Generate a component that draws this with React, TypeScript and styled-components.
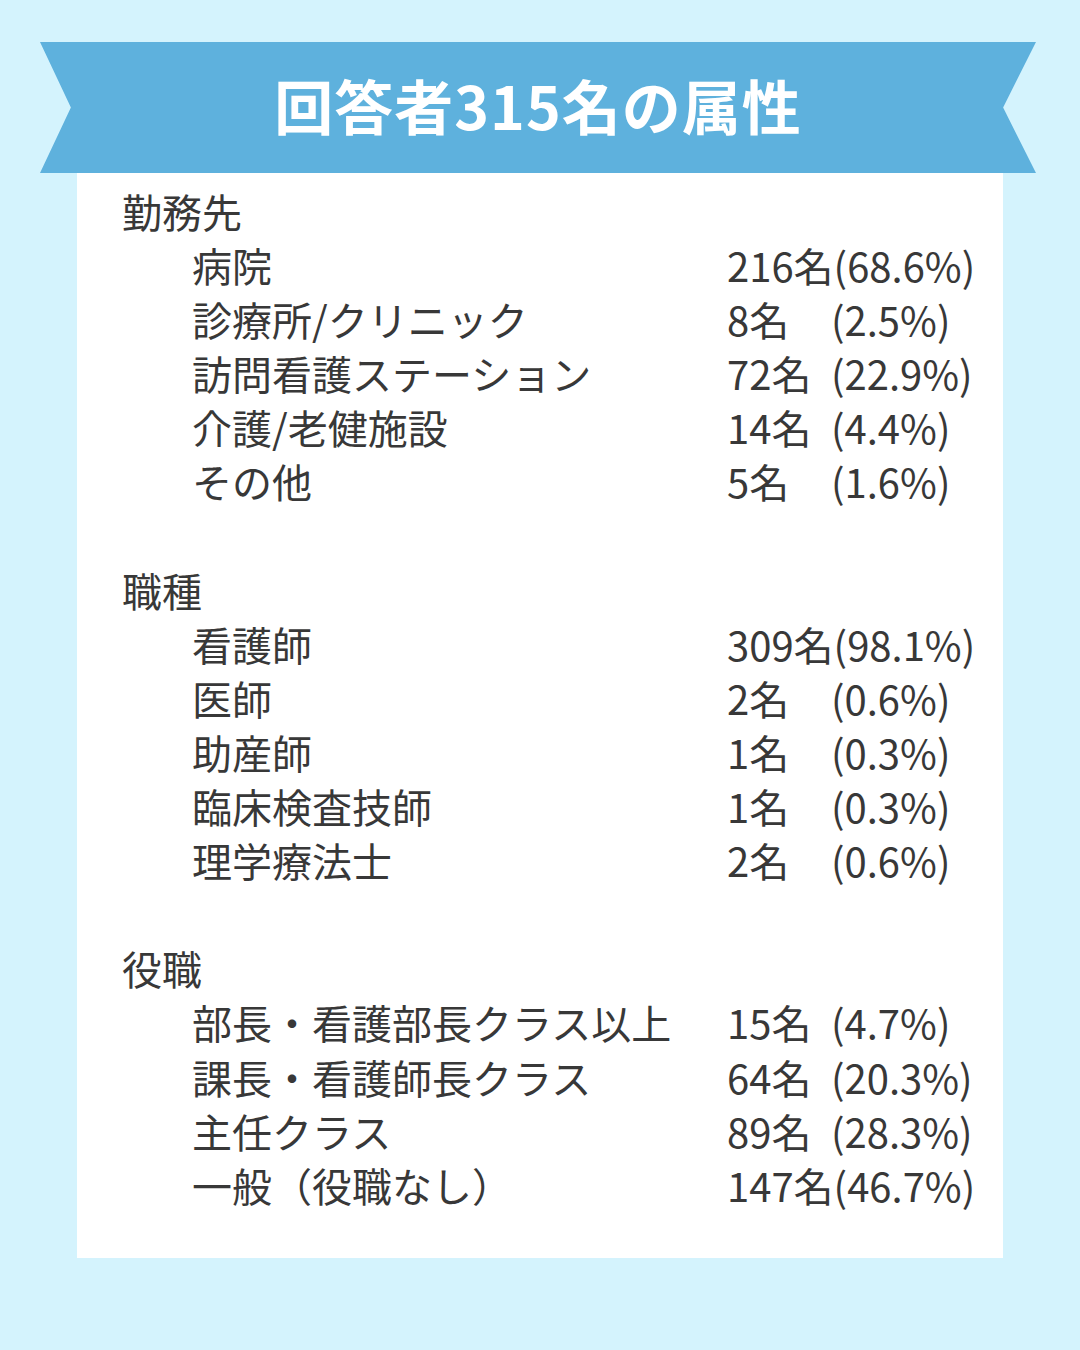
import styled, { createGlobalStyle } from "styled-components";

const GlobalStyle = createGlobalStyle`
  html, body {
    margin: 0;
    padding: 0;
    background: #d4f3fd;
  }
`;

interface Item {
  label: string;
  count: string;
  percent: string;
}

interface Section {
  title: string;
  items: Item[];
}

const sections: Section[] = [
  {
    title: "勤務先",
    items: [
      { label: "病院", count: "216名", percent: "(68.6%)" },
      { label: "診療所/クリニック", count: "8名", percent: "(2.5%)" },
      { label: "訪問看護ステーション", count: "72名", percent: "(22.9%)" },
      { label: "介護/老健施設", count: "14名", percent: "(4.4%)" },
      { label: "その他", count: "5名", percent: "(1.6%)" },
    ],
  },
  {
    title: "職種",
    items: [
      { label: "看護師", count: "309名", percent: "(98.1%)" },
      { label: "医師", count: "2名", percent: "(0.6%)" },
      { label: "助産師", count: "1名", percent: "(0.3%)" },
      { label: "臨床検査技師", count: "1名", percent: "(0.3%)" },
      { label: "理学療法士", count: "2名", percent: "(0.6%)" },
    ],
  },
  {
    title: "役職",
    items: [
      { label: "部長・看護部長クラス以上", count: "15名", percent: "(4.7%)" },
      { label: "課長・看護師長クラス", count: "64名", percent: "(20.3%)" },
      { label: "主任クラス", count: "89名", percent: "(28.3%)" },
      { label: "一般（役職なし）", count: "147名", percent: "(46.7%)" },
    ],
  },
];

const App = () => {
  return (
    <>
      <GlobalStyle />
      <Page>
        <Banner>
          <BannerTitle>回答者315名の属性</BannerTitle>
        </Banner>
        <Card>
          {sections.map((section) => (
            <SectionBlock key={section.title}>
              <Heading>{section.title}</Heading>
              {section.items.map((item) => (
                <Row key={item.label}>
                  <Label>{item.label}</Label>
                  <Value>
                    <Count>{item.count}</Count>
                    <span>{item.percent}</span>
                  </Value>
                </Row>
              ))}
            </SectionBlock>
          ))}
        </Card>
      </Page>
    </>
  );
};
export default App;

const Page = styled.div`
  width: 1080px;
  height: 1350px;
  box-sizing: border-box;
  padding-top: 42px;
  background: #d4f3fd;
  font-family: "Noto Sans CJK JP", "Noto Sans", sans-serif;
`;

const Banner = styled.div`
  margin: 0 44px 0 40px;
  height: 131px;
  background: #5eb1dd;
  clip-path: polygon(0 0, 100% 0, 96.7% 50%, 100% 100%, 0 100%, 3.1% 50%);
  display: flex;
  align-items: center;
  justify-content: center;
`;

const BannerTitle = styled.h1`
  margin: 0 0 6px;
  color: #ffffff;
  font-size: 59px;
  font-weight: 700;
  letter-spacing: 1px;
  line-height: 1;
`;

const Card = styled.div`
  margin: 0 77px;
  height: 1085px;
  box-sizing: border-box;
  background: #ffffff;
  padding: 11px 0 0 45px;
  color: #383838;
  font-size: 40px;
  line-height: 54.1px;
`;

const SectionBlock = styled.div`
  & + & {
    margin-top: 54.1px;
  }
`;

const Heading = styled.div`
  font-weight: 400;
`;

const Row = styled.div`
  display: grid;
  grid-template-columns: 535px auto;
  padding-left: 70px;
`;

const Label = styled.span`
  white-space: nowrap;
`;

const Value = styled.span`
  white-space: nowrap;
`;

const Count = styled.span`
  display: inline-block;
  min-width: 104px;
`;
